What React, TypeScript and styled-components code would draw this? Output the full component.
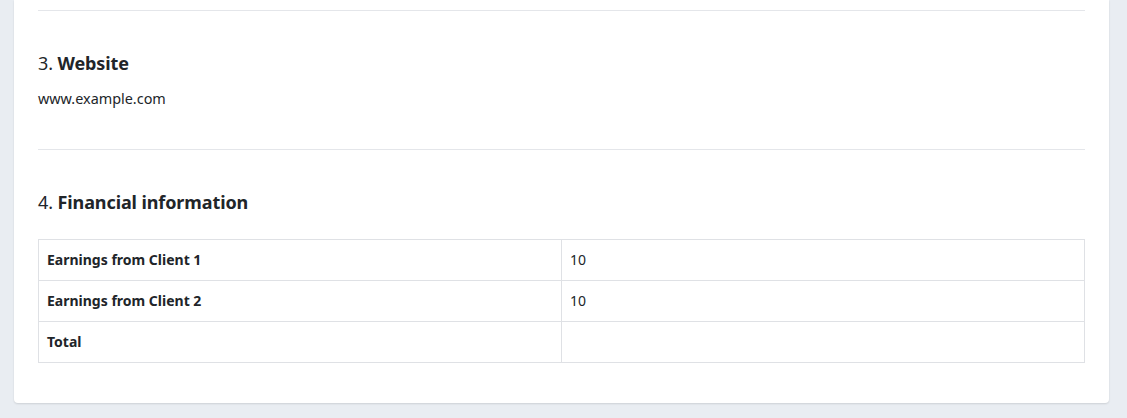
import styled, { createGlobalStyle } from 'styled-components';

const GlobalStyle = createGlobalStyle`
  html, body {
    margin: 0;
    padding: 0;
    background: #e9edf2;
  }
  body {
    font-family: 'Noto Sans', sans-serif;
    color: #212529;
  }
`;

const Page = styled.div`
  padding: 0 18px 15px 14px;
`;

const Card = styled.div`
  background: #fff;
  border-radius: 0 0 4px 4px;
  box-shadow: 0 1px 2px rgba(0, 0, 0, 0.12);
  padding: 10px 24px 0;
`;

const Section = styled.section`
  border-top: 1px solid #e4e6ea;
  padding: 40px 0;
`;

const Heading = styled.h3<{ $gap: number }>`
  margin: 0 0 ${(p) => p.$gap}px;
  font-size: 18px;
  line-height: 24px;
  font-weight: 400;
  letter-spacing: -0.1px;

  b {
    font-weight: 700;
  }
`;

const Text = styled.p`
  margin: 0;
  font-size: 14.4px;
  line-height: 21px;
`;

const Table = styled.table`
  width: 100%;
  border-collapse: collapse;
  table-layout: fixed;
  font-size: 14px;
  line-height: 24px;

  td {
    border: 1px solid #dfe1e5;
    padding: 8px 8px;
    vertical-align: middle;
  }
`;

const LabelCell = styled.td`
  font-weight: 700;
`;

const rows = [
  { label: 'Earnings from Client 1', value: '10' },
  { label: 'Earnings from Client 2', value: '10' },
  { label: 'Total', value: '' },
];

export default function App() {
  return (
    <>
      <GlobalStyle />
      <Page>
        <Card>
          <Section>
            <Heading $gap={13}>
              3. <b>Website</b>
            </Heading>
            <Text>www.example.com</Text>
          </Section>
          <Section>
            <Heading $gap={25}>
              4. <b>Financial information</b>
            </Heading>
            <Table>
              <tbody>
                {rows.map((row) => (
                  <tr key={row.label}>
                    <LabelCell>{row.label}</LabelCell>
                    <td>{row.value}</td>
                  </tr>
                ))}
              </tbody>
            </Table>
          </Section>
        </Card>
      </Page>
    </>
  );
}
